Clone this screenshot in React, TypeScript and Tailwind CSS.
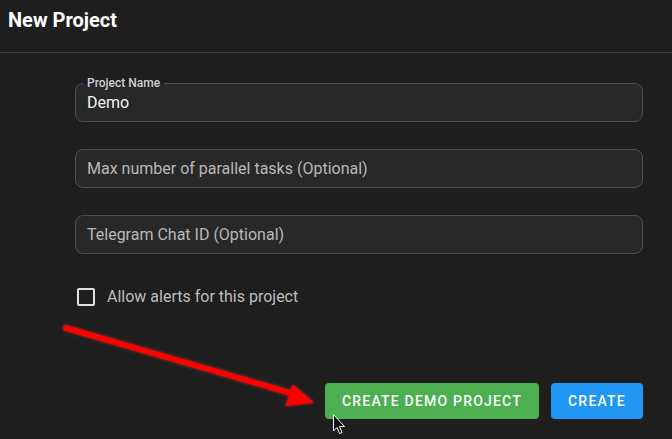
import React from 'react';

function Field({ label, value, placeholder }: { label?: string; value?: string; placeholder?: string }) {
  return (
    <div className="relative h-[39px] w-[568px] rounded-[8px] border border-[#4d4d4d] bg-[#282828]">
      {label && (
        <span className="absolute left-[7px] top-[-8px] bg-[linear-gradient(to_bottom,#1e1e1e_50%,#282828_50%)] px-[4px] text-[12px] font-medium leading-[15px] text-[#d0d0d0]">
          {label}
        </span>
      )}
      <div className="flex h-full items-center px-[11px] pt-[1px] text-[16px]">
        {value ? (
          <span className="text-[#f2f2f2]">{value}</span>
        ) : (
          <span className="text-[#b8b8b8]">{placeholder}</span>
        )}
      </div>
    </div>
  );
}

export default function App() {
  return (
    <div className="relative h-[439px] w-[672px] overflow-hidden bg-[#1e1e1e] font-['Roboto',sans-serif]">
      <div className="h-[53px] border-b border-[#3a3a3a] px-2 pt-[6px]">
        <h1 className="text-[20px] font-bold leading-[28px] text-white">New Project</h1>
      </div>

      <div className="ml-[75px] flex flex-col pt-[30px]">
        <Field label="Project Name" value="Demo" />
        <div className="mt-[27px]">
          <Field placeholder="Max number of parallel tasks (Optional)" />
        </div>
        <div className="mt-[27px]">
          <Field placeholder="Telegram Chat ID (Optional)" />
        </div>
        <label className="mt-[31px] flex items-center gap-[12px] pl-[2px]">
          <span className="h-[18px] w-[18px] rounded-[2px] border-2 border-[#e0e0e0]" />
          <span className="text-[16px] text-[#bdbdbd]">Allow alerts for this project</span>
        </label>
      </div>

      <div className="absolute bottom-[20px] right-[29px] flex gap-[12px]">
        <button className="h-[36px] w-[214px] rounded-[4px] bg-[#4caf50] text-[14px] font-medium tracking-[1.2px] text-white">
          CREATE DEMO PROJECT
        </button>
        <button className="h-[36px] w-[92px] rounded-[4px] bg-[#2196f3] text-[14px] font-medium tracking-[1.2px] text-white">
          CREATE
        </button>
      </div>

      <svg className="pointer-events-none absolute left-0 top-0" width="672" height="439" viewBox="0 0 672 439">
        <defs>
          <filter id="glow" x="-10%" y="-10%" width="120%" height="120%">
            <feGaussianBlur stdDeviation="1.5" />
          </filter>
        </defs>
        <g filter="url(#glow)" opacity="0.45">
          <line x1="66" y1="328" x2="294" y2="394" stroke="#ff3030" strokeWidth="7" strokeLinecap="round" />
          <polygon points="312,402 293,386 287,405" fill="#ff3030" stroke="#ff3030" strokeWidth="3" strokeLinejoin="round" />
        </g>
        <line x1="66" y1="328" x2="294" y2="394" stroke="#ff0000" strokeWidth="5.5" strokeLinecap="round" />
        <polygon points="312,402 293,386 287,405" fill="#ff0000" stroke="#ff0000" strokeWidth="2" strokeLinejoin="round" />
        <path
          d="M333.5 414.5 L333.5 431 L337 427.5 L339.5 433.5 L342 432.5 L339.5 426.5 L344.5 426.5 Z"
          fill="#111"
          stroke="#fff"
          strokeWidth="1"
          strokeLinejoin="round"
        />
      </svg>
    </div>
  );
}
